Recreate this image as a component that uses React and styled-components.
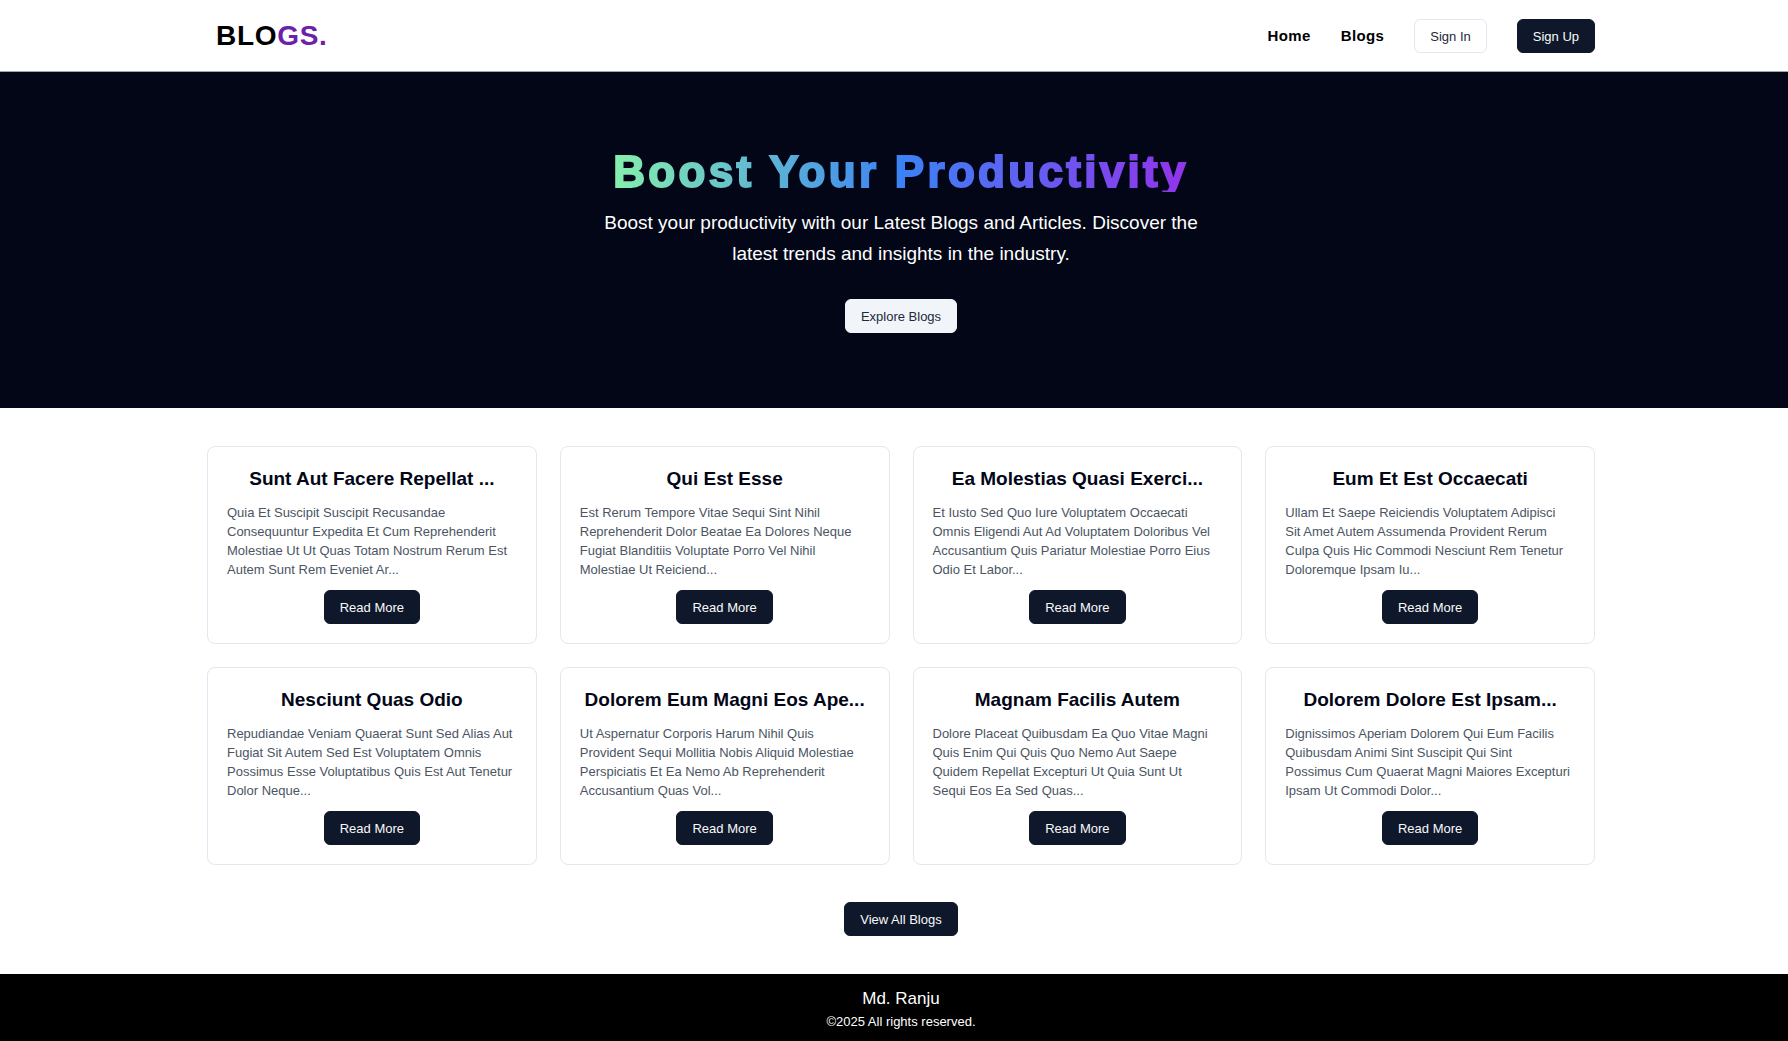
import React from "react";
import styled, { createGlobalStyle, css } from "styled-components";

const GlobalStyle = createGlobalStyle`
  *, *::before, *::after { box-sizing: border-box; }
  body {
    margin: 0;
    background: #ffffff;
    color: #020617;
    font-family: "Liberation Sans", Arial, sans-serif;
  }
  h1, h2, p { margin: 0; }
  a { color: inherit; text-decoration: none; }
`;

const Page = styled.div`
  min-height: 100vh;
  display: flex;
  flex-direction: column;
`;

const Container = styled.div`
  width: 100%;
  max-width: 1388px;
  margin: 0 auto;
`;

const Header = styled.header`
  padding: 19px 0 18px 14px;
  background: #ffffff;
  border-bottom: 1px solid #a1a5ae;
`;

const HeaderRow = styled(Container)`
  display: flex;
  align-items: center;
  justify-content: space-between;
  padding-left: 9px;
`;

const Logo = styled.a`
  font-size: 28px;
  line-height: 34px;
  font-weight: 700;
  letter-spacing: 0.025em;
  color: #000000;
`;

const LogoAccent = styled.span`
  color: #6b21a8;
`;

const Nav = styled.nav`
  display: flex;
  align-items: center;
  gap: 30px;
`;

const NavLink = styled.a`
  font-size: 15px;
  line-height: 22px;
  font-weight: 700;
  letter-spacing: 0.025em;
  color: #000000;
`;

const variants = {
  primary: css`
    background: #0f172a;
    border-color: #0f172a;
    color: #f8fafc;
  `,
  secondary: css`
    background: #f1f5f9;
    border-color: #f1f5f9;
    color: #1e293b;
  `,
  outline: css`
    background: #ffffff;
    border-color: #e2e8f0;
    color: #1e293b;
  `,
};

const Button = styled.button`
  height: 34px;
  padding: 0 15px;
  border: 1px solid;
  border-radius: 6px;
  font-family: inherit;
  font-size: 13px;
  line-height: 19px;
  white-space: nowrap;
  cursor: pointer;
  ${({ $variant = "primary" }) => variants[$variant]}
`;

const Hero = styled.section`
  display: flex;
  flex-direction: column;
  align-items: center;
  padding: 75px 0 75px 14px;
  background: #020617;
  text-align: center;
`;

/* The box is shorter than the line, so the gradient stops just under the baseline. */
const HeroTitle = styled.h1`
  height: 45px;
  font-size: 44px;
  line-height: 50px;
  font-weight: 900;
  letter-spacing: 0.075em;
  color: transparent;
  -webkit-text-stroke: 2px transparent;
  background: linear-gradient(to right, #86efac, #3b82f6, #9333ea);
  background-clip: text;
  -webkit-background-clip: text;
`;

const HeroText = styled.p`
  max-width: 634px;
  margin: 15px 0 30px;
  font-size: 19px;
  line-height: 31px;
  color: #ffffff;
`;

const Main = styled.main`
  flex: 1;
  padding: 38px 0 38px 14px;
`;

const Posts = styled(Container)`
  display: grid;
  grid-template-columns: repeat(4, minmax(0, 1fr));
  gap: 23px;
`;

const Card = styled.article`
  display: flex;
  flex-direction: column;
  align-items: center;
  gap: 11px;
  padding: 19px;
  border: 1px solid #e2e8f0;
  border-radius: 8px;
`;

const CardTitle = styled.h2`
  font-size: 19px;
  line-height: 26px;
  font-weight: 700;
  text-align: center;
`;

const CardText = styled.p`
  flex: 1;
  align-self: stretch;
  padding-right: 4px;
  font-size: 13px;
  line-height: 19px;
  color: #4b5563;
`;

const More = styled.div`
  display: flex;
  justify-content: center;
  margin-top: 37px;
`;

const Footer = styled.footer`
  padding: 12px 0 10px 14px;
  background: #000000;
  color: #ffffff;
  text-align: center;
`;

const Author = styled.p`
  font-size: 17px;
  line-height: 26px;
`;

const Copyright = styled.p`
  font-size: 13px;
  line-height: 19px;
`;

const posts = [
  ["Sunt Aut Facere Repellat ...", "Quia Et Suscipit Suscipit Recusandae Consequuntur Expedita Et Cum Reprehenderit Molestiae Ut Ut Quas Totam Nostrum Rerum Est Autem Sunt Rem Eveniet Ar..."],
  ["Qui Est Esse", "Est Rerum Tempore Vitae Sequi Sint Nihil Reprehenderit Dolor Beatae Ea Dolores Neque Fugiat Blanditiis Voluptate Porro Vel Nihil Molestiae Ut Reiciend..."],
  ["Ea Molestias Quasi Exerci...", "Et Iusto Sed Quo Iure Voluptatem Occaecati Omnis Eligendi Aut Ad Voluptatem Doloribus Vel Accusantium Quis Pariatur Molestiae Porro Eius Odio Et Labor..."],
  ["Eum Et Est Occaecati", "Ullam Et Saepe Reiciendis Voluptatem Adipisci Sit Amet Autem Assumenda Provident Rerum Culpa Quis Hic Commodi Nesciunt Rem Tenetur Doloremque Ipsam Iu..."],
  ["Nesciunt Quas Odio", "Repudiandae Veniam Quaerat Sunt Sed Alias Aut Fugiat Sit Autem Sed Est Voluptatem Omnis Possimus Esse Voluptatibus Quis Est Aut Tenetur Dolor Neque..."],
  ["Dolorem Eum Magni Eos Ape...", "Ut Aspernatur Corporis Harum Nihil Quis Provident Sequi Mollitia Nobis Aliquid Molestiae Perspiciatis Et Ea Nemo Ab Reprehenderit Accusantium Quas Vol..."],
  ["Magnam Facilis Autem", "Dolore Placeat Quibusdam Ea Quo Vitae Magni Quis Enim Qui Quis Quo Nemo Aut Saepe Quidem Repellat Excepturi Ut Quia Sunt Ut Sequi Eos Ea Sed Quas..."],
  ["Dolorem Dolore Est Ipsam...", "Dignissimos Aperiam Dolorem Qui Eum Facilis Quibusdam Animi Sint Suscipit Qui Sint Possimus Cum Quaerat Magni Maiores Excepturi Ipsam Ut Commodi Dolor..."],
];

export default function App() {
  return (
    <Page>
      <GlobalStyle />
      <Header>
        <HeaderRow>
          <Logo href="#home">
            BLO<LogoAccent>GS.</LogoAccent>
          </Logo>
          <Nav>
            <NavLink href="#home">Home</NavLink>
            <NavLink href="#blogs">Blogs</NavLink>
            <Button $variant="outline">Sign In</Button>
            <Button>Sign Up</Button>
          </Nav>
        </HeaderRow>
      </Header>
      <Hero>
        <HeroTitle>Boost Your Productivity</HeroTitle>
        <HeroText>
          Boost your productivity with our Latest Blogs and Articles. Discover the latest trends and
          insights in the industry.
        </HeroText>
        <Button $variant="secondary">Explore Blogs</Button>
      </Hero>
      <Main id="blogs">
        <Posts>
          {posts.map(([title, text]) => (
            <Card key={title}>
              <CardTitle>{title}</CardTitle>
              <CardText>{text}</CardText>
              <Button>Read More</Button>
            </Card>
          ))}
        </Posts>
        <More>
          <Button>View All Blogs</Button>
        </More>
      </Main>
      <Footer>
        <Author>Md. Ranju</Author>
        <Copyright>©2025 All rights reserved.</Copyright>
      </Footer>
    </Page>
  );
}
